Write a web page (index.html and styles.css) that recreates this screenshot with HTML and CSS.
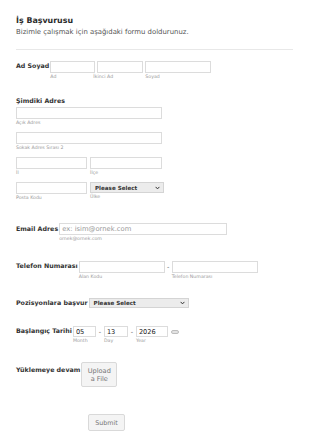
FILE: index.html
```html
<!DOCTYPE html>
<html lang="tr">
<head>
<meta charset="utf-8">
<title>İş Başvurusu</title>
<link rel="stylesheet" href="styles.css">
</head>
<body>
<form class="form">
  <header class="header">
    <h1 class="title">İş Başvurusu</h1>
    <p class="subtitle">Bizimle çalışmak için aşağıdaki formu doldurunuz.</p>
  </header>

  <div class="row row-name">
    <label class="label">Ad Soyad</label>
    <div class="fields">
      <div class="field w-first"><input class="input" type="text"><span class="sub">Ad</span></div>
      <div class="field w-middle"><input class="input" type="text"><span class="sub sub-shift">İkinci Ad</span></div>
      <div class="field w-last"><input class="input" type="text"><span class="sub">Soyad</span></div>
    </div>
  </div>

  <div class="block row-address">
    <label class="label">Şimdiki Adres</label>
    <div class="addr">
      <div class="field w-full"><input class="input" type="text"><span class="sub">Açık Adres</span></div>
      <div class="field w-full"><input class="input" type="text"><span class="sub">Sokak Adres Sırası 2</span></div>
      <div class="pair">
        <div class="field w-half"><input class="input" type="text"><span class="sub">İl</span></div>
        <div class="field w-half2"><input class="input" type="text"><span class="sub">İlçe</span></div>
      </div>
      <div class="pair">
        <div class="field w-half"><input class="input" type="text"><span class="sub">Posta Kodu</span></div>
        <div class="field w-country">
          <div class="select"><span>Please Select</span><svg class="chev" viewBox="0 0 8 6" width="5" height="4"><path d="M1 1.2 L4 4.4 L7 1.2" fill="none" stroke="#333" stroke-width="1.6"/></svg></div>
          <span class="sub sub-select">Ülke</span>
        </div>
      </div>
    </div>
  </div>

  <div class="row row-email">
    <label class="label">Email Adres</label>
    <div class="field w-email"><input class="input" type="text" placeholder="ex: isim@ornek.com"><span class="sub">ornek@ornek.com</span></div>
  </div>

  <div class="row row-phone">
    <label class="label">Telefon Numarası</label>
    <div class="fields">
      <div class="field w-phone"><input class="input" type="text"><span class="sub">Alan Kodu</span></div>
      <span class="dash">-</span>
      <div class="field w-phone"><input class="input" type="text"><span class="sub">Telefon Numarası</span></div>
    </div>
  </div>

  <div class="row row-position">
    <label class="label">Pozisyonlara başvur</label>
    <div class="select w-position"><span>Please Select</span><svg class="chev" viewBox="0 0 8 6" width="5" height="4"><path d="M1 1.2 L4 4.4 L7 1.2" fill="none" stroke="#333" stroke-width="1.6"/></svg></div>
  </div>

  <div class="row row-date">
    <label class="label">Başlangıç Tarihi</label>
    <div class="fields">
      <div class="field w-month"><input class="input date" type="text" value="05"><span class="sub">Month</span></div>
      <span class="dash">-</span>
      <div class="field w-day"><input class="input date" type="text" value="13"><span class="sub">Day</span></div>
      <span class="dash">-</span>
      <div class="field w-year"><input class="input date" type="text" value="2026"><span class="sub">Year</span></div>
      <span class="cal"></span>
    </div>
  </div>

  <div class="row row-upload">
    <label class="label">Yüklemeye devam</label>
    <button type="button" class="btn upload">Upload<br>a File</button>
  </div>

  <div class="submit-row">
    <button type="submit" class="btn submit">Submit</button>
  </div>
</form>
</body>
</html>
```

FILE: styles.css
```css
* { box-sizing: border-box; }

html, body {
  margin: 0;
  padding: 0;
  background: #ffffff;
}

body {
  font-family: "DejaVu Sans", Verdana, sans-serif;
  color: #333;
}

.form {
  padding: 16px 17px 0 16px;
  width: 310px;
}

.header {
  padding-bottom: 12px;
  border-bottom: 1px solid #e8e8e8;
}

.title {
  margin: 0;
  font-size: 7.9px;
  line-height: 10px;
  font-weight: bold;
  color: #2b2b2b;
}

.subtitle {
  margin: 2px 0 0;
  font-size: 6.9px;
  line-height: 9px;
  color: #555;
}

.row {
  display: flex;
  align-items: flex-start;
}

.label {
  font-size: 6.3px;
  line-height: 7px;
  font-weight: bold;
  color: #333;
  padding-top: 1px;
  margin-right: 1px;
  white-space: nowrap;
}

.fields {
  display: flex;
  align-items: flex-start;
}

.field {
  display: flex;
  flex-direction: column;
}

.input {
  display: block;
  width: 100%;
  height: 12px;
  margin: 0;
  padding: 0 2px;
  border: 1px solid #dcdcdc;
  border-radius: 0;
  background: #fff;
  font-family: "DejaVu Sans", Verdana, sans-serif;
  font-size: 6.8px;
  color: #333;
  outline: none;
}

.input::placeholder {
  color: #999;
}

.sub {
  margin-top: 1px;
  font-size: 4.7px;
  line-height: 6px;
  color: #9a9a9a;
  white-space: nowrap;
}

.row-name { margin-top: 11px; }
.w-first { width: 45px; }
.w-middle { width: 46px; margin-left: 2px; }
.w-last { width: 66px; margin-left: 2px; }
.sub-shift { margin-left: -4px; }

.row-address { margin-top: 17px; }
.row-address .label { display: block; padding-top: 0; }
.addr {
  margin-top: 3px;
  display: flex;
  flex-direction: column;
  gap: 6px;
}
.w-full { width: 146px; }
.pair {
  display: flex;
  gap: 3px;
  align-items: flex-start;
}
.w-half { width: 71px; }
.w-half2 { width: 72px; }
.w-country { width: 74px; }

.select {
  display: flex;
  align-items: center;
  justify-content: space-between;
  height: 11px;
  padding: 0 3px 0 4px;
  border: 1px solid #d4d4d4;
  background: #ececec;
  font-size: 5.6px;
  font-weight: bold;
  color: #333;
  white-space: nowrap;
}
.sub-select { margin-top: 1px; }

.row-email { margin-top: 22px; }
.row-email .label { padding-top: 2px; }
.w-email { width: 168px; }

.row-phone { margin-top: 19px; }
.row-phone .label { padding-top: 1px; }
.w-phone { width: 86px; }
.dash {
  width: 7px;
  text-align: center;
  font-size: 6.5px;
  line-height: 12px;
  color: #555;
}

.row-position { margin-top: 18px; }
.w-position { width: 100px; height: 10px; }

.row-date { margin-top: 18px; }
.w-month { width: 23px; }
.w-day { width: 24px; }
.w-year { width: 32px; }
.row-date .dash { width: 8px; }
.input.date {
  height: 11px;
  color: #222;
  font-size: 6.6px;
}
.cal {
  display: block;
  width: 8px;
  height: 4px;
  margin: 4px 0 0 3px;
  border: 1px solid #bdbdbd;
  border-radius: 2px;
  background: #e2e2e2;
}

.row-upload { margin-top: 18px; }
.row-upload .label { padding-top: 4px; }

.btn {
  font-family: "DejaVu Sans", Verdana, sans-serif;
  background: #f4f4f4;
  border: 1px solid #d9d9d9;
  border-radius: 2px;
  color: #777;
  padding: 0;
  margin: 0;
}

.upload {
  width: 36px;
  height: 25px;
  font-size: 6.6px;
  line-height: 8px;
  text-align: center;
}

.submit-row {
  margin-top: 27px;
  padding-left: 72px;
}

.submit {
  display: block;
  width: 37px;
  height: 17px;
  font-size: 6.4px;
}
```
